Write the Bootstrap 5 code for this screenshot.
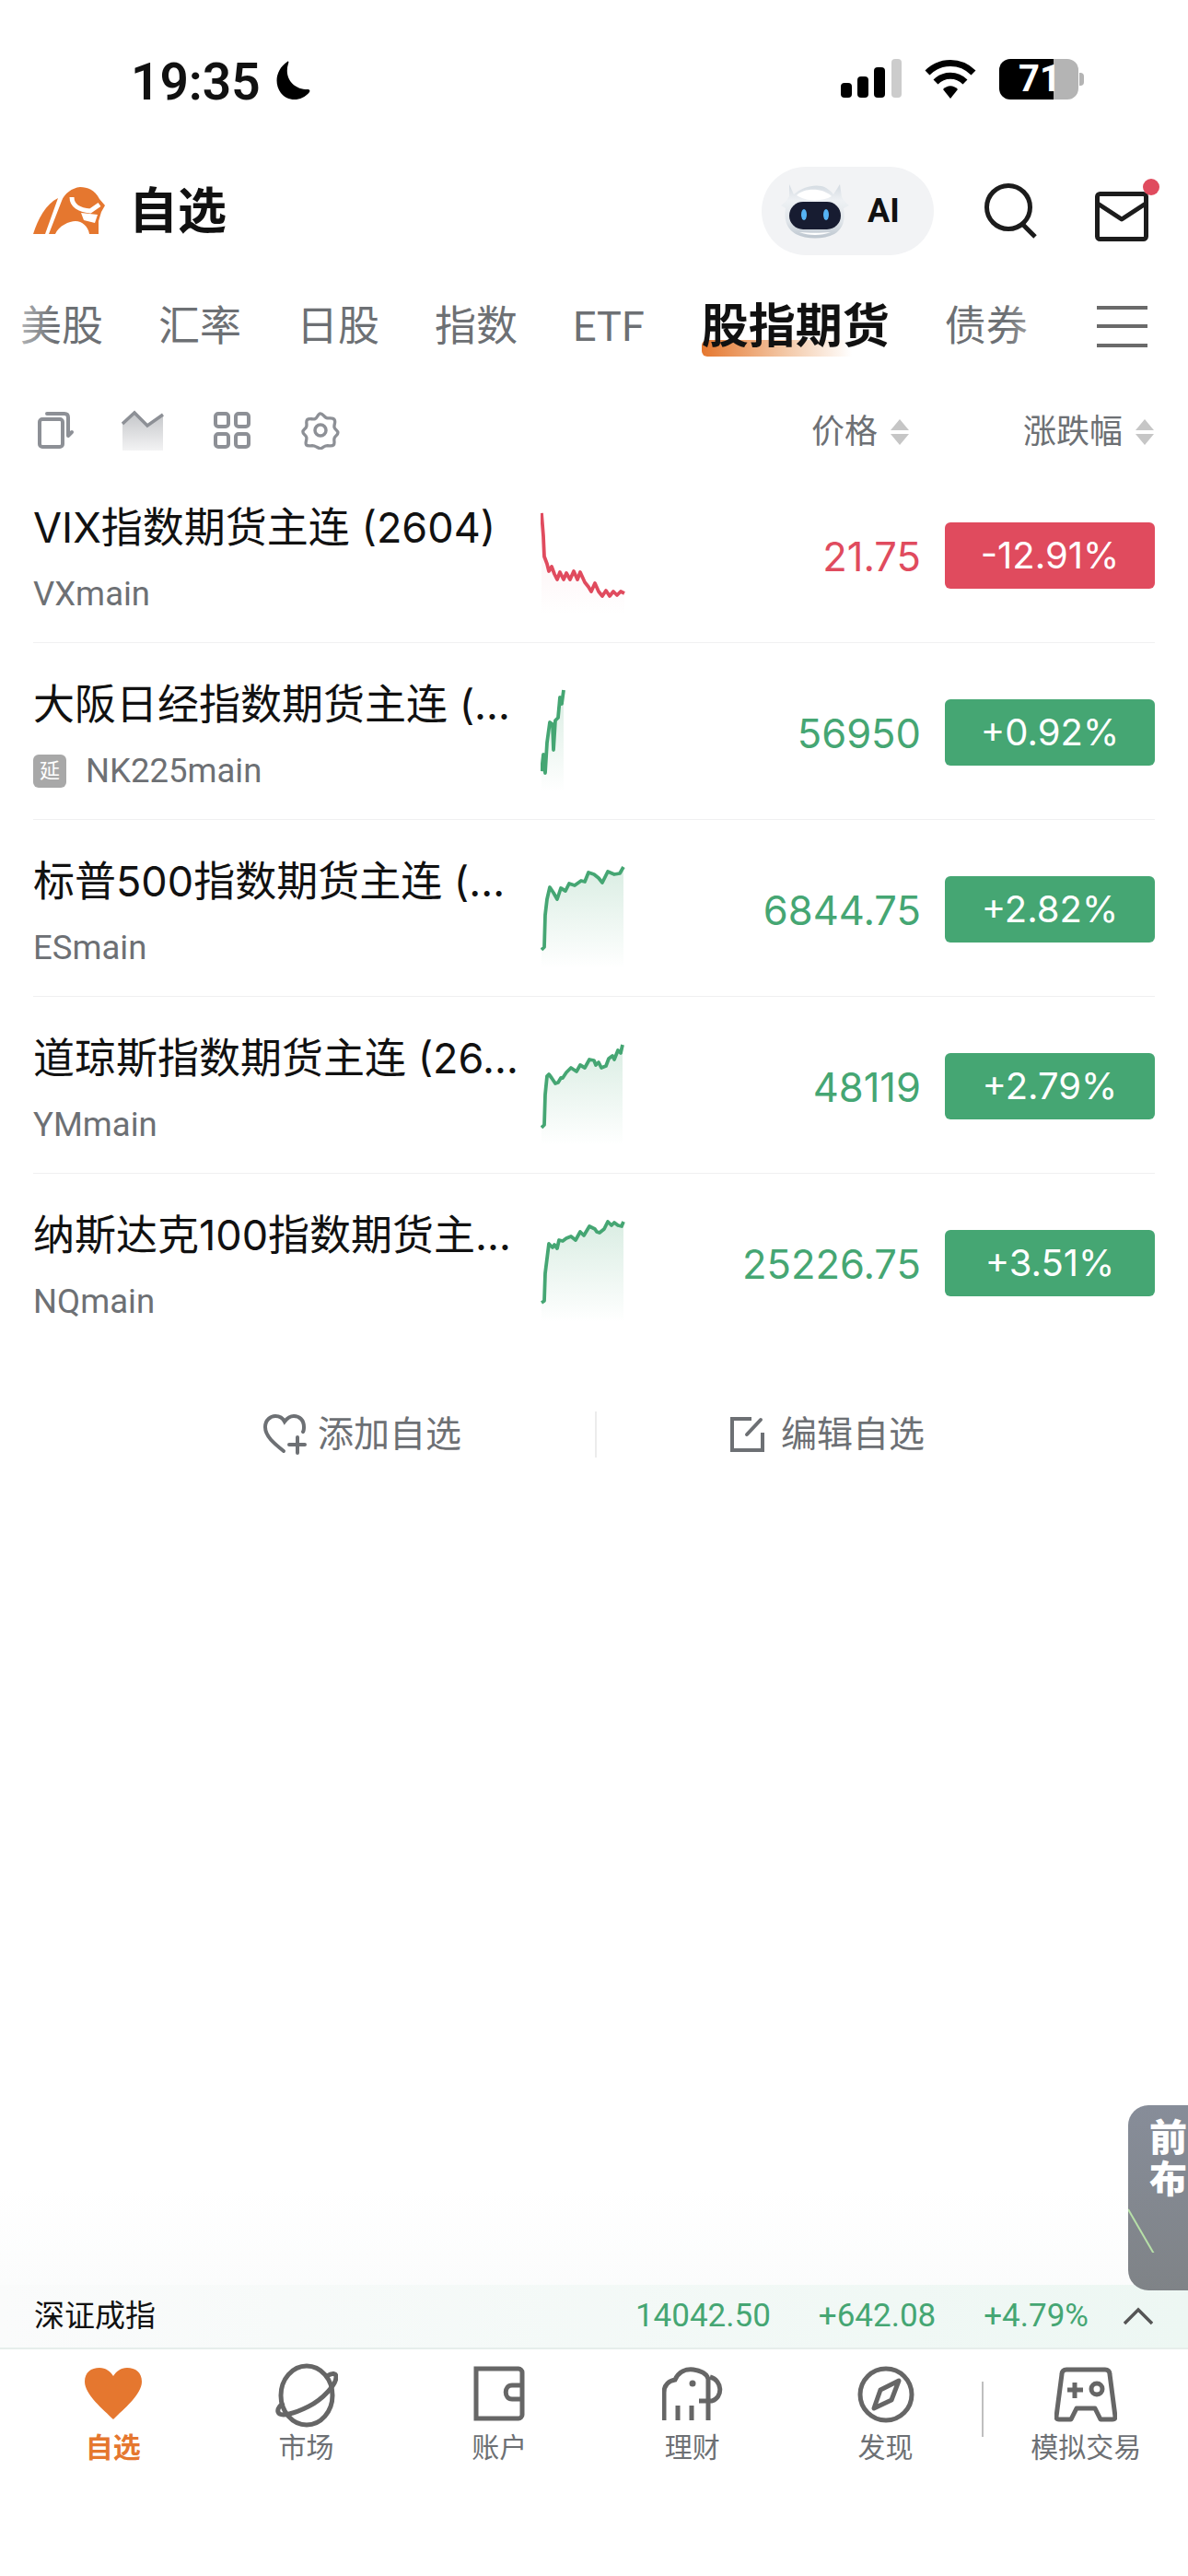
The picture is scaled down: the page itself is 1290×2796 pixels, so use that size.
<!DOCTYPE html>
<html lang="zh-CN">
<head>
  <meta charset="UTF-8">
  <meta name="viewport" content="width=device-width, initial-scale=1.0">
  <title>自选</title>
  <link href="https://cdn.jsdelivr.net/npm/bootstrap@5.3.3/dist/css/bootstrap.min.css" rel="stylesheet">
  <style>
    body {
      font-family: Roboto, "Noto Sans CJK SC", sans-serif;
      background: #fff;
      color: #111;
    }
    .page { width: 1290px; min-height: 2796px; }
    .status-bar { height: 172px; padding: 64px 113px 0 142px; }
    .clock { font-size: 55px; font-weight: 600; line-height: 54px; margin-top: -2px; }
    .moon { margin-top: 2px; margin-left: 11px; }
    .batt {
      width: 86px; height: 44px; border-radius: 12px;
      background: linear-gradient(to right, #000 69%, #b4b4b4 69%);
      color: #fff; font-size: 40px; font-weight: 700; line-height: 44px;
      padding-left: 21px;
    }
    .batt-nub { width: 5px; height: 14px; background: #b4b4b4; border-radius: 0 4px 4px 0; margin: 15px 0 0 1px; }
    .top-bar { height: 133px; padding: 0 37px 19px 36px; }
    .top-title { font-size: 53px; font-weight: 700; margin: 2px 0 0 26px; line-height: 1; }
    .ai-pill { width: 187px; height: 96px; padding-left: 21px; gap: 20px; background: #f2f3f5; border-radius: 48px; font-size: 36px; font-weight: 700; }
    .search-ico { margin-left: 55px; }
    .mail-wrap { width: 64px; height: 70px; margin-left: 62px; }
    .mail-wrap svg { left: 0; top: 14px; }
    .mail-dot { width: 18px; height: 18px; top: 0; right: -6px; background: #e04b5e; }
    .tabs { height: 100px; margin-bottom: 23px; padding-left: 22px; gap: 60px; font-size: 45px; color: #6d7074; }
    .tab-on { color: #111; font-size: 51px; font-weight: 700; line-height: 60px; margin-left: 2px; }
    .tab-on::after {
      content: ""; position: absolute; left: 0; width: 80%; bottom: -2px; height: 18px; border-radius: 6px 0 0 6px;
      background: linear-gradient(to right, #e5772f, #f3c7a5 55%, rgba(255,255,255,0));
      z-index: -1;
    }
    .tab-fade { background: linear-gradient(to right, rgba(255,255,255,.75), rgba(255,255,255,0)); width: 60px; left: 0; top: 0; bottom: 0; }
    .menu-btn { position: absolute; left: 1191px; top: 0; bottom: 0; width: 99px; background: #fff; }
    .menu-btn::before {
      content: ""; position: absolute; left: -100px; width: 60px; top: 0; bottom: 0;
      background: linear-gradient(to right, rgba(255,255,255,0), rgba(255,255,255,.7));
    }
    .menu-lines { width: 55px; height: 45px; border-top: 4px solid #6a6a6a; border-bottom: 4px solid #6a6a6a; margin-top: 27px; }
    .menu-lines i { display: block; height: 4px; background: #6a6a6a; margin-top: 16px; }
    .tool-row { height: 78px; padding: 0 37px 0 40px; color: #6d7074; font-size: 36px; }
    .tool-icons { gap: 50px; }
    .tool-gear { margin-left: 5px; }
    .tool-grid { margin-left: 4px; }
    .sort-col { line-height: 1; padding-top: 3px; }
    .sort-price { width: 107px; }
    .sort-pct { margin-left: 123px; }
    .sort-tri { margin-left: 14px; }
    .quote-row { height: 192px; margin-left: 36px; margin-right: 36px; border-bottom: 1px solid #f0f0f1; }
    .quote-row.no-line { border-bottom: 0; }
    .quote-name-col { width: 530px; }
    .quote-name { font-family: Inter, "Noto Sans CJK SC", sans-serif; font-size: 45px; line-height: 56px; margin-top: 39px; }
    .quote-code { font-size: 36.5px; line-height: 44px; color: #6d7074; margin-top: 22px; }
    .delay-tag { width: 36px; height: 36px; border-radius: 6px; background: #a8a8a8; color: #fff; font-size: 22px; margin-right: 21px; }
    .spark { width: 92px; height: 112px; margin-left: 21px; margin-top: 50px; flex: none; }
    .quote-price { font-family: Inter, sans-serif; font-size: 43.5px; width: 320px; text-align: right; margin-left: auto; margin-top: 6px; }
    .quote-pct { font-family: Inter, sans-serif; font-size: 40px; width: 228px; height: 72px; margin-left: 26px; border-radius: 6px; color: #fff; line-height: 72px; text-align: center; margin-top: 2px; }
    .up { color: #45a673; }
    .dn { color: #e04b5e; }
    .bg-up { background: #45a673; }
    .bg-dn { background: #e04b5e; }
    .edit-row { height: 100px; margin-top: 41px; font-size: 39px; color: #6d7074; }
    .edit-half { width: 646px; padding-right: 145px; }
    .edit-half svg { margin-right: 11px; }
    .edit-right { padding-left: 144px; }
    .edit-sep { width: 2px; height: 50px; background: #ececec; }
    .fill-area { flex: 1 1 auto; background: linear-gradient(to bottom, #fff 88%, #fbfcfc 100%); }
    .ticker {
      height: 70px; padding: 0 38px 0 37px; font-size: 35px; border-bottom: 2px solid #e6eeeb;
      background: linear-gradient(to right, #fafbfb, #edf7f3);
    }
    .ticker-name { font-size: 33px; color: #111; }
    .ticker-chg { margin-left: 52px; }
    .ticker-pct { margin-left: 52px; }
    .ticker svg { margin-left: 38px; }
    .tab-bar { height: 246px; padding-left: 18px; padding-top: 15px; color: #6d7074; font-size: 30px; }
    .tab-cell { width: 210px; line-height: 1.2; }
    .tab-cell svg { height: 70px; display: block; margin-bottom: 4px; }
    .tab-active { color: #e5772f; }
    .tab-last { width: 222px; }
    .tab-sep { width: 2px; height: 60px; background: #bfbfbf; align-self: flex-start; margin-top: 20px; }
    .side-tab {
      position: absolute; left: 1225px; top: 2285px; width: 65px; height: 201px; overflow: hidden;
      border-radius: 22px 0 0 22px;
      background: linear-gradient(to bottom, #878d99, #7f8387);
      color: #fff; font-size: 41px; font-weight: 900; line-height: 45px; padding: 14px 0 0 23px;
    }
    .side-tab svg { position: absolute; left: 0; top: 100px; }
  </style>
</head>
<body>
<div class="page d-flex flex-column position-relative overflow-hidden">

  <!-- Status bar -->
  <div class="status-bar d-flex align-items-start">
    <span class="clock">19:35</span>
    <svg class="moon" width="46" height="44" viewBox="0 0 44 44"><path d="M17 1C5 9 2 24 10 35c7 9 22 10 31-1 1-2 0-3-2-3C24 31 13 19 18 3c1-2 0-3-1-2z" fill="#000"/></svg>
    <svg class="ms-auto" width="66" height="42" viewBox="0 0 66 42">
      <rect x="0" y="26" width="12" height="16" rx="4" fill="#000"/>
      <rect x="18" y="19" width="12" height="23" rx="4" fill="#000"/>
      <rect x="36" y="9" width="12" height="33" rx="4" fill="#000"/>
      <rect x="55" y="0" width="11" height="42" rx="4" fill="#ccc"/>
    </svg>
    <svg class="ms-4" width="58" height="44" viewBox="0 0 58 44" fill="none" stroke="#000" stroke-width="7">
      <path d="M4 15C18 1 40 1 54 15"/>
      <path d="M13 25c9-9 23-9 32 0"/>
      <path d="M21 33c5-5 11-5 16 0L29 43z" fill="#000" stroke="none"/>
    </svg>
    <div class="batt ms-4">71</div>
    <div class="batt-nub"></div>
  </div>

  <!-- Header -->
  <div class="top-bar d-flex align-items-center">
    <svg width="78" height="52" viewBox="0 0 78 52">
      <path d="M0 51C5 35 14 18 27 12L13 51z" fill="#e5772f"/>
      <path d="M17 51L31 15C34 7 42 1 51 0c8 0 16 3 21 13l6 7-4 7-3 10v14H61c-1-8-8-14-15-14s-18 5-22 14z" fill="#e5772f"/>
      <path d="M42 11c0 9 8 14 20 15l10-7" fill="none" stroke="#fff" stroke-width="5"/>
      <path d="M52 28l18 2-3 9-12-3z" fill="#fff"/>
    </svg>
    <span class="top-title">自选</span>
    <div class="ai-pill ms-auto d-flex align-items-center">
      <svg width="74" height="62" viewBox="0 0 74 62">
        <defs><linearGradient id="robotShell" x1="0" y1="0" x2="0" y2="1"><stop offset="0" stop-color="#d3dae1"/><stop offset=".3" stop-color="#eef1f4"/><stop offset=".7" stop-color="#dfe4e9"/><stop offset="1" stop-color="#bcc5ce"/></linearGradient></defs>
        <path d="M9 2L14 13C22 6 34 2 44 4c5 1 10 5 13 9L64 2l2 14c2 3 4 6 8 9l-6 3c2 12 0 22-10 28-12 6-30 6-42 0C6 50 3 40 5 28l-5-3c4-3 7-6 9-10z" fill="url(#robotShell)"/>
        <path d="M17 14C26 5 46 6 55 15 45 21 27 21 17 14z" fill="#fff"/>
        <path d="M20 54c10 4 24 4 34 0-10 1-24 1-34 0z" fill="#fff"/>
        <rect x="9" y="21" width="56" height="30" rx="15" fill="#171c31"/>
        <ellipse cx="25" cy="35" rx="3" ry="6" fill="#56b4f5"/>
        <ellipse cx="49" cy="35" rx="3" ry="6" fill="#56b4f5"/>
      </svg>
      <span>AI</span>
    </div>
    <svg class="search-ico" width="58" height="60" viewBox="0 0 58 60" fill="none" stroke="#1c1c1c" stroke-width="5">
      <circle cx="26" cy="26" r="23.5"/><path d="M41 44l14 14"/>
    </svg>
    <div class="mail-wrap position-relative">
      <svg class="position-absolute" width="58" height="54" viewBox="0 0 58 54" fill="none" stroke="#1c1c1c" stroke-width="5" stroke-linejoin="round">
        <rect x="2.5" y="2.5" width="53" height="49" rx="3"/><path d="M3 13l26 17 26-17"/>
      </svg>
      <span class="mail-dot position-absolute rounded-circle"></span>
    </div>
  </div>

  <!-- Market tabs -->
  <div class="tabs d-flex align-items-center position-relative text-nowrap">
    <span>美股</span><span>汇率</span><span>日股</span><span>指数</span><span>ETF</span>
    <span class="tab-on position-relative">股指期货</span><span>债券</span>
    <div class="tab-fade position-absolute"></div>
    <div class="menu-btn"><div class="menu-lines"><i></i></div></div>
  </div>

  <!-- Toolbar -->
  <div class="tool-row d-flex align-items-center">
    <div class="tool-icons d-flex align-items-center">
      <svg width="42" height="42" viewBox="0 0 42 42" fill="none" stroke="#8d9096" stroke-width="4" stroke-linejoin="round">
        <rect x="3" y="9" width="25" height="30" rx="3"/><path d="M11 3h19c3 0 4 2 4 4v20l4-4" stroke-linecap="round"/>
      </svg>
      <svg width="46" height="44" viewBox="0 0 46 44">
        <defs><linearGradient id="toolFade" x1="0" y1="0" x2="0" y2="1"><stop offset="0" stop-color="#c4c6c9"/><stop offset="1" stop-color="#f3f3f4"/></linearGradient></defs>
        <path d="M1 15L14 3l14 14L45 5v39H1z" fill="url(#toolFade)"/>
        <path d="M1 15L14 3l14 14L45 5" fill="none" stroke="#8d9096" stroke-width="3.5"/>
      </svg>
      <svg class="tool-grid" width="40" height="40" viewBox="0 0 40 40" fill="none" stroke="#8d9096" stroke-width="4">
        <rect x="2" y="2" width="14" height="14" rx="3"/><rect x="24" y="2" width="14" height="14" rx="3"/>
        <rect x="2" y="24" width="14" height="14" rx="3"/><rect x="24" y="24" width="14" height="14" rx="3"/>
      </svg>
      <svg class="tool-gear" width="42" height="42" viewBox="0 0 42 42" fill="none" stroke="#8d9096" stroke-width="3.5" stroke-linejoin="round">
        <path d="M21 2c3 0 4 4 7 5s7-1 9 2 -1 6 0 9 4 3 4 6-3 3-4 6 1 6-1 8-6 0-9 1-4 3-6 3-4-2-7-3-7 1-9-1 1-6 0-9-4-3-4-6 3-3 4-6-1-6 1-8 6 0 9-1 3-6 6-6z" transform="scale(.95) translate(1 1)"/>
        <circle cx="21" cy="21" r="6"/>
      </svg>
    </div>
    <div class="sort-col sort-price ms-auto d-flex align-items-center">价格<svg class="sort-tri" width="20" height="28" viewBox="0 0 20 28"><path d="M10 0l10 12H0zM0 16h20L10 28z" fill="#c6c6c6"/></svg></div>
    <div class="sort-col sort-pct d-flex align-items-center">涨跌幅<svg class="sort-tri" width="20" height="28" viewBox="0 0 20 28"><path d="M10 0l10 12H0zM0 16h20L10 28z" fill="#c6c6c6"/></svg></div>
  </div>

  <svg width="0" height="0" class="position-absolute">
    <defs>
      <linearGradient id="fadeUp" x1="0" y1="0" x2="0" y2="1"><stop offset="0" stop-color="#45a673" stop-opacity=".2"/><stop offset="1" stop-color="#45a673" stop-opacity="0"/></linearGradient>
      <linearGradient id="fadeDn" x1="0" y1="0" x2="0" y2="1"><stop offset="0" stop-color="#e04b5e" stop-opacity=".1"/><stop offset="1" stop-color="#e04b5e" stop-opacity="0"/></linearGradient>
    </defs>
  </svg>

  <div id="quoteList"></div>

  <!-- Add / edit -->
  <div class="edit-row d-flex align-items-center">
    <div class="edit-half d-flex align-items-center justify-content-end">
      <svg width="48" height="44" viewBox="0 0 48 44" fill="none" stroke="#6d7074" stroke-width="4" stroke-linecap="round">
        <path d="M22 40C12 32 2 24 2 14 2 6 8 2 13 2c4 0 8 2 10 6 3-4 6-6 10-6 6 0 11 4 11 12 0 2 0 4-1 5"/>
        <path d="M37 25v17M28 33h17"/>
      </svg>
      <span>添加自选</span>
    </div>
    <div class="edit-sep"></div>
    <div class="edit-right d-flex align-items-center">
      <svg class="me-3" width="40" height="40" viewBox="0 0 40 40" fill="none" stroke="#6d7074" stroke-width="4">
        <path d="M24 3H3v34h33V18"/><path d="M19 20L34 4" stroke-linecap="round"/>
      </svg>
      <span>编辑自选</span>
    </div>
  </div>

  <div class="fill-area"></div>

  <!-- Index ticker -->
  <div class="ticker d-flex align-items-center">
    <span class="ticker-name">深证成指</span>
    <span class="up ms-auto">14042.50</span>
    <span class="up ticker-chg">+642.08</span>
    <span class="up ticker-pct">+4.79%</span>
    <svg width="32" height="20" viewBox="0 0 32 20" fill="none" stroke="#555" stroke-width="3.5"><path d="M1 18L16 3l15 15"/></svg>
  </div>

  <!-- Bottom tabs -->
  <div class="tab-bar d-flex align-items-start">
    <div class="tab-cell tab-active d-flex flex-column align-items-center fw-bold">
      <svg width="62" height="70" viewBox="0 0 62 70"><path d="M31 61C20 50 0 34 0 20 0 10 7 5 16 5c7 0 12 4 15 9 3-5 8-9 15-9 9 0 16 5 16 15 0 14-20 30-31 41z" fill="#e5772f"/></svg>
      <span>自选</span>
    </div>
    <div class="tab-cell d-flex flex-column align-items-center">
      <svg width="68" height="70" viewBox="0 0 68 70" fill="none" stroke="#666" stroke-width="5">
        <ellipse cx="34" cy="35" rx="28" ry="32"/>
        <path d="M56 14c6-4 10-3 10 1 0 8-14 24-30 32C20 55 5 59 3 53c-1-3 2-7 6-10"/>
      </svg>
      <span>市场</span>
    </div>
    <div class="tab-cell d-flex flex-column align-items-center">
      <svg width="56" height="70" viewBox="0 0 56 70" fill="none" stroke="#666" stroke-width="5">
        <path d="M3 6h46c2 0 4 2 4 4v46c0 2-2 4-4 4H3z"/>
        <path d="M53 24H42c-9 0-9 15 0 15h11"/>
      </svg>
      <span>账户</span>
    </div>
    <div class="tab-cell d-flex flex-column align-items-center">
      <svg width="66" height="70" viewBox="0 0 66 70" fill="none" stroke="#666" stroke-width="5">
        <path d="M2 62V32c0-9 6-13 12-14C18 9 26 6 34 7c7 1 14 4 16 10v45"/>
        <path d="M52 15c14 4 14 22 2 26H40"/>
        <path d="M17 46v16M32 46v16"/>
        <circle cx="33" cy="22" r="3.5" fill="#666" stroke="none"/>
      </svg>
      <span>理财</span>
    </div>
    <div class="tab-cell d-flex flex-column align-items-center">
      <svg width="62" height="70" viewBox="0 0 62 70" fill="none" stroke="#666" stroke-width="5">
        <circle cx="31" cy="34" r="28"/>
        <path d="M45 19L37 40 18 49 25 29z" stroke-linejoin="round"/>
      </svg>
      <span>发现</span>
    </div>
    <div class="tab-sep"></div>
    <div class="tab-cell tab-last d-flex flex-column align-items-center">
      <svg width="68" height="70" viewBox="0 0 68 70" fill="none" stroke="#666" stroke-width="5" stroke-linejoin="round">
        <path d="M13 7h42c3 0 5 2 5 5l6 46c0 2-1 3-3 3H50l-6-12H24l-6 12H5c-2 0-3-1-3-3l6-46c0-3 2-5 5-5z"/>
        <path d="M14 29h17M22 21v17"/><circle cx="46" cy="28" r="6"/>
      </svg>
      <span>模拟交易</span>
    </div>
  </div>

  <!-- Floating side tab -->
  <div class="side-tab">前<br>布
    <svg width="40" height="60" viewBox="0 0 40 60"><path d="M0 13L29 63" stroke="#b7e0a8" stroke-width="2" fill="none"/></svg>
  </div>
</div>

<script src="https://cdn.jsdelivr.net/npm/bootstrap@5.3.3/dist/js/bootstrap.bundle.min.js"></script>
<script>
const quotes = [
  { name: "VIX指数期货主连 (2604)", code: "VXmain", price: "21.75", pct: "-12.91%", dir: "dn",
    pts: [[0,0],[2,25],[3,47],[6,55],[8,63],[11,58],[14,66],[17,72],[20,64],[24,72],[27,65],[31,72],[35,63],[39,72],[42,64],[47,75],[51,80],[54,85],[58,76],[62,85],[66,90],[70,84],[74,90],[78,85],[82,89],[86,85],[90,87]] },
  { name: "大阪日经指数期货主连 (…", code: "NK225main", delay: true, price: "56950", pct: "+0.92%", dir: "up",
    pts: [[0,88],[2,70],[4,90],[6,57],[9,35],[12,37],[13,65],[15,33],[18,30],[20,8],[22,15],[24,0]] },
  { name: "标普500指数期货主连 (…", code: "ESmain", price: "6844.75", pct: "+2.82%", dir: "up",
    pts: [[0,90],[3,87],[4,52],[6,35],[9,22],[13,28],[17,35],[21,23],[26,26],[30,18],[36,20],[43,15],[47,16],[51,6],[57,8],[62,12],[66,17],[72,5],[79,8],[85,7],[89,0]] },
  { name: "道琼斯指数期货主连 (26…", code: "YMmain", price: "48119", pct: "+2.79%", dir: "up",
    pts: [[0,91],[3,88],[4,55],[6,35],[8,33],[11,37],[15,43],[18,42],[21,37],[23,37],[27,31],[32,26],[38,30],[42,23],[47,26],[52,17],[57,18],[59,23],[62,20],[65,26],[70,24],[73,16],[77,13],[79,17],[83,7],[86,10],[88,1]] },
  { name: "纳斯达克100指数期货主…", code: "NQmain", price: "25226.75", pct: "+3.51%", dir: "up",
    pts: [[0,89],[3,87],[4,57],[6,41],[8,25],[12,29],[14,26],[17,30],[19,21],[23,22],[27,19],[32,17],[37,21],[42,12],[46,16],[52,6],[58,9],[60,12],[63,13],[68,9],[72,1],[76,5],[79,2],[83,5],[87,6],[89,1]] }
];

const sparkline = (q) => {
  const line = q.pts.map(p => p.join(",")).join(" ");
  const last = q.pts[q.pts.length - 1][0];
  const stroke = q.dir === "up" ? "#45a673" : "#e04b5e";
  const fade = q.dir === "up" ? "fadeUp" : "fadeDn";
  return `<svg class="spark" viewBox="-1 -1 92 112">
    <polygon points="${line} ${last},110 0,110" fill="url(#${fade})"/>
    <polyline points="${line}" fill="none" stroke="${stroke}" stroke-width="3.8" stroke-linejoin="round"/>
  </svg>`;
};

document.getElementById("quoteList").innerHTML = quotes.map((q, i) => `
  <div class="quote-row d-flex align-items-center ${i === quotes.length - 1 ? "no-line" : ""}">
    <div class="quote-name-col align-self-start">
      <div class="quote-name text-nowrap">${q.name}</div>
      <div class="quote-code d-flex align-items-center">
        ${q.delay ? '<span class="delay-tag d-inline-flex align-items-center justify-content-center">延</span>' : ""}${q.code}
      </div>
    </div>
    <div class="align-self-start">${sparkline(q)}</div>
    <div class="quote-price ${q.dir}">${q.price}</div>
    <div class="quote-pct bg-${q.dir}">${q.pct}</div>
  </div>`).join("");
</script>
</body>
</html>
